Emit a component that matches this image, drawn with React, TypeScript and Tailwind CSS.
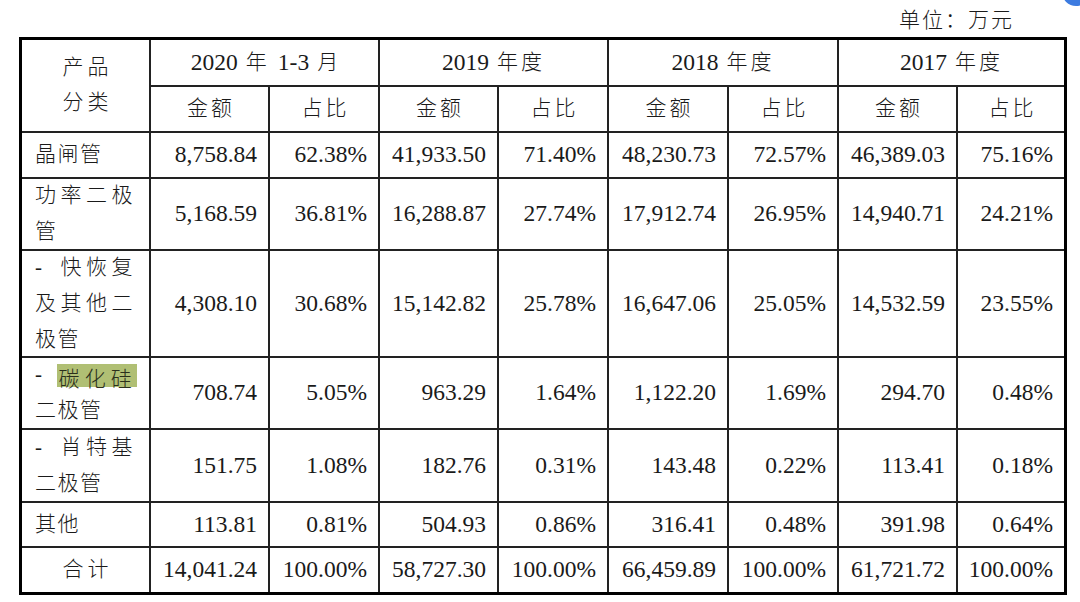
type Line = { chars: string[]; justify?: boolean; mark?: boolean };

interface Row {
  label: Line[];
  center?: boolean;
  values: string[];
}

const rows: Row[] = [
  {
    label: [{ chars: ['晶', '闸', '管'] }],
    values: ['8,758.84', '62.38%', '41,933.50', '71.40%', '48,230.73', '72.57%', '46,389.03', '75.16%'],
  },
  {
    label: [{ chars: ['功', '率', '二', '极'], justify: true }, { chars: ['管'] }],
    values: ['5,168.59', '36.81%', '16,288.87', '27.74%', '17,912.74', '26.95%', '14,940.71', '24.21%'],
  },
  {
    label: [
      { chars: ['-', '快', '恢', '复'], justify: true },
      { chars: ['及', '其', '他', '二'], justify: true },
      { chars: ['极', '管'] },
    ],
    values: ['4,308.10', '30.68%', '15,142.82', '25.78%', '16,647.06', '25.05%', '14,532.59', '23.55%'],
  },
  {
    label: [{ chars: ['-', '碳', '化', '硅'], justify: true, mark: true }, { chars: ['二', '极', '管'] }],
    values: ['708.74', '5.05%', '963.29', '1.64%', '1,122.20', '1.69%', '294.70', '0.48%'],
  },
  {
    label: [{ chars: ['-', '肖', '特', '基'], justify: true }, { chars: ['二', '极', '管'] }],
    values: ['151.75', '1.08%', '182.76', '0.31%', '143.48', '0.22%', '113.41', '0.18%'],
  },
  {
    label: [{ chars: ['其', '他'] }],
    values: ['113.81', '0.81%', '504.93', '0.86%', '316.41', '0.48%', '391.98', '0.64%'],
  },
  {
    label: [{ chars: ['合', '计'] }],
    center: true,
    values: ['14,041.24', '100.00%', '58,727.30', '100.00%', '66,459.89', '100.00%', '61,721.72', '100.00%'],
  },
];

// year headers: latin part + CJK part, CJK spaced out like the source
const periods = [
  { pre: '2020', cjk: '年', post: '1-3', tail: '月' },
  { pre: '2019', cjk: '年度' },
  { pre: '2018', cjk: '年度' },
  { pre: '2017', cjk: '年度' },
];

function LabelLine({ line }: { line: Line }) {
  if (line.justify) {
    return (
      <div className="grid grid-cols-4 h-[36px] items-center">
        <span>{line.chars[0]}</span>
        {line.mark ? (
          <div className="col-span-3 -ml-[4px] grid grid-cols-3 items-center h-[23px] bg-[#b0bf74] pl-[2px]">
            {line.chars.slice(1).map((c, i) => (
              <span key={i} className="text-[#2b2f1c]">
                {c}
              </span>
            ))}
          </div>
        ) : (
          line.chars.slice(1).map((c, i) => <span key={i}>{c}</span>)
        )}
      </div>
    );
  }
  return <div className="h-[36px] flex items-center tracking-[1.5px]">{line.chars.join('')}</div>;
}

function Cell({ children, className = '' }: { children: React.ReactNode; className?: string }) {
  return <div className={`bg-white flex items-center ${className}`}>{children}</div>;
}

export default function App() {
  return (
    <div className="relative w-[1080px] h-[602px] bg-white overflow-hidden text-[#1a1a1a] font-light font-['Liberation_Serif','Noto_Sans_CJK_SC',serif]">
      <div className="absolute left-[1062px] -top-[22px] w-[28px] h-[28px] rounded-full bg-[#3c7be0]" />

      <div className="h-[37px] flex items-center justify-end pr-[66px] pt-[4px] text-[21px] tracking-[2px]">
        单位：万元
      </div>

      <div className="ml-[19px] w-[1048px] border-[3px] border-black bg-[#222] grid gap-[2px] grid-cols-[127px_117px_108px_117px_108px_118px_108px_117px_106px] grid-rows-[45px_44px_44px_70px_105px_70px_71px_43px_44px]">
        <Cell className="row-span-2 justify-center text-[21px]">
          <div className="flex flex-col items-center">
            <div className="h-[35px] flex items-center tracking-[4px] pl-[4px]">产品</div>
            <div className="h-[35px] flex items-center tracking-[4px] pl-[4px]">分类</div>
          </div>
        </Cell>
        {periods.map((p) => (
          <Cell key={p.pre} className="col-span-2 justify-center text-[23.5px] gap-[8px]">
            <span>{p.pre}</span>
            <span className="text-[21px] tracking-[3px]">{p.cjk}</span>
            {p.post && <span>{p.post}</span>}
            {p.tail && <span className="text-[21px]">{p.tail}</span>}
          </Cell>
        ))}
        {periods.map((p) => (
          <div key={`sub-${p.pre}`} className="contents">
            <Cell className="justify-center text-[21px] tracking-[3px] pl-[3px]">金额</Cell>
            <Cell className="justify-center text-[21px] tracking-[3px] pl-[3px]">占比</Cell>
          </div>
        ))}

        {rows.map((row, ri) => (
          <div key={ri} className="contents">
            {row.center ? (
              <Cell className="justify-center text-[21px] tracking-[4px] pl-[4px]">{row.label[0].chars.join('')}</Cell>
            ) : (
              <Cell className="pl-[13px] pr-[12px] text-[21px]">
                <div className="w-full flex flex-col">
                  {row.label.map((line, li) => (
                    <LabelLine key={li} line={line} />
                  ))}
                </div>
              </Cell>
            )}
            {row.values.map((v, vi) => (
              <Cell key={vi} className="justify-end pr-[11px] text-[23.5px]">
                {v}
              </Cell>
            ))}
          </div>
        ))}
      </div>
    </div>
  );
}
